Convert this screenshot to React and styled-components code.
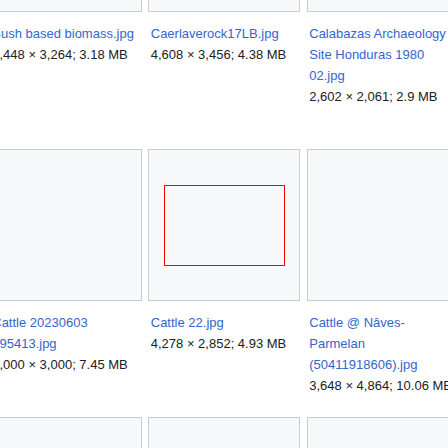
import styled, { createGlobalStyle } from "styled-components";

const rows = [
  {
    height: 289,
    items: [
      { name: "Bush based biomass.jpg", meta: "2,448 × 3,264; 3.18 MB" },
      { name: "Caerlaverock17LB.jpg", meta: "4,608 × 3,456; 4.38 MB" },
      { name: "Calabazas Archaeology Site Honduras 1980 02.jpg", meta: "2,602 × 2,061; 2.9 MB" },
    ],
  },
  {
    height: 268,
    items: [
      { name: "Cattle 20230603 095413.jpg", meta: "4,000 × 3,000; 7.45 MB" },
      { name: "Cattle 22.jpg", meta: "4,278 × 2,852; 4.93 MB", broken: true },
      { name: "Cattle @ Nâves-Parmelan (50411918606).jpg", meta: "3,648 × 4,864; 10.06 MB" },
    ],
  },
  {
    height: 152,
    items: [{}, {}, {}],
  },
];

export default function App() {
  return (
    <>
      <GlobalStyle />
      <Gallery>
        {rows.map((row, i) => (
          <Row key={i} $height={row.height}>
            {row.items.map((item, j) => (
              <Item key={j}>
                <Thumb>{item.broken && <Broken />}</Thumb>
                {item.name && (
                  <Caption>
                    <FileLink href="#">{item.name}</FileLink>
                    <div>{item.meta}</div>
                  </Caption>
                )}
              </Item>
            ))}
          </Row>
        ))}
      </Gallery>
    </>
  );
}

//---------STYLING--------------

const GlobalStyle = createGlobalStyle`
  html, body {
    margin: 0;
    padding: 0;
    background: #fff;
    overflow: hidden;
  }
  body {
    font-family: "Liberation Sans", Arial, sans-serif;
  }
`;

// page is scrolled, so the first row of boxes starts above the window
const Gallery = styled.div`
  display: flex;
  flex-direction: column;
  margin: -140px 0 0 -10.25px;
`;

const Row = styled.div`
  display: grid;
  grid-template-columns: repeat(3, 152px);
  column-gap: 6.5px;
  align-items: start;
  height: ${(p) => p.$height}px;
`;

const Item = styled.div`
  display: flex;
  flex-direction: column;
`;

const Thumb = styled.div`
  box-sizing: border-box;
  height: 152px;
  border: 1px solid #c8ccd1;
  background: #f8f9fa;
  display: flex;
  align-items: center;
  justify-content: center;
`;

const Broken = styled.span`
  box-sizing: border-box;
  width: 121px;
  height: 81px;
  border: 1px solid #f00;
`;

const Caption = styled.div`
  padding: 11px 2.5px 0;
  font-size: 13px;
  line-height: 21px;
  color: #202122;
  overflow-wrap: break-word;
  white-space: normal;
`;

const FileLink = styled.a`
  display: block;
  color: #36c;
  text-decoration: none;
`;
